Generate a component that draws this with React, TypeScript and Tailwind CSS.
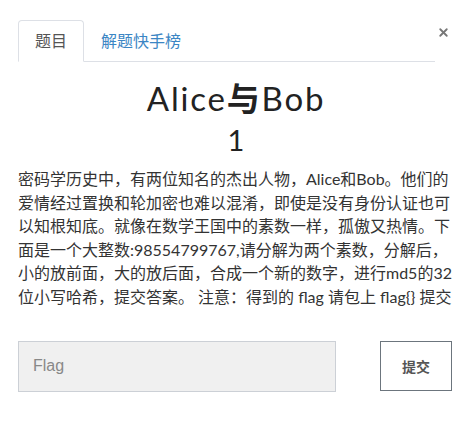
import { X } from "lucide-react";

export default function App() {
  const cjk = "font-['Lato','Noto_Sans_CJK_SC',sans-serif]";

  return (
    <div className={`w-[476px] h-[428px] bg-white text-[#333] ${cjk}`}>
      <div className="flex items-start pl-[18px] pr-[26px] pt-[20px]">
        {/* Tabs */}
        <div className="flex flex-1 border-b border-[#dde0e6] h-[42px]">
          <div className="w-[66px] h-[42px] border border-[#dde0e6] border-b-white rounded-t-[4px] bg-white flex items-center justify-center text-[16px] text-[#555] -mb-px">
            题目
          </div>
          <div className="ml-[17px] flex items-center text-[16px] text-[#3b86c4]">
            解题快手榜
          </div>
        </div>
        <button className="ml-[2px] mt-[6px] text-[#777]">
          <X className="w-[13px] h-[13px]" strokeWidth={3.4} />
        </button>
      </div>

      <div className="px-[18px] pr-[22px]">
        <h1 className="mt-[16px] text-center text-[33px] leading-[40px] font-normal tracking-[1.8px] text-[#222] font-['Lato','Noto_Sans_CJK_SC',sans-serif]">
          Alice<span className="font-bold">与</span>Bob
        </h1>
        <div className="mt-[5px] text-center text-[29px] leading-[34px] text-[#222]">1</div>
        <p className="mt-[10px] text-[16px] leading-[23.6px] text-[#333]">
          {"密码学历史中，有两位知名的杰出人物，Alice和Bob。他们的爱情经过置换和轮加密也难以混淆，即使是没有身份认证也可以知根知底。就像在数学王国中的素数一样，孤傲又热情。下面是一个大整数:98554799767,请分解为两个素数，分解后，小的放前面，大的放后面，合成一个新的数字，进行md5的32位小写哈希，提交答案。 注意：得到的 flag 请包上 flag{} 提交"}
        </p>

        <div className="mt-[32px] flex items-center">
          <input
            placeholder="Flag"
            className="w-[318px] h-[51px] bg-[#f0f0f0] border border-[#ccd0d6] px-[14px] text-[16px] placeholder:text-[#888] font-['Liberation_Sans','Noto_Sans_CJK_SC',sans-serif] outline-none"
          />
          <button className="ml-auto mr-[2px] w-[72px] h-[50px] border border-[#6c757d] bg-white text-[14px] font-bold text-[#555]">
            提交
          </button>
        </div>
      </div>
    </div>
  );
}
